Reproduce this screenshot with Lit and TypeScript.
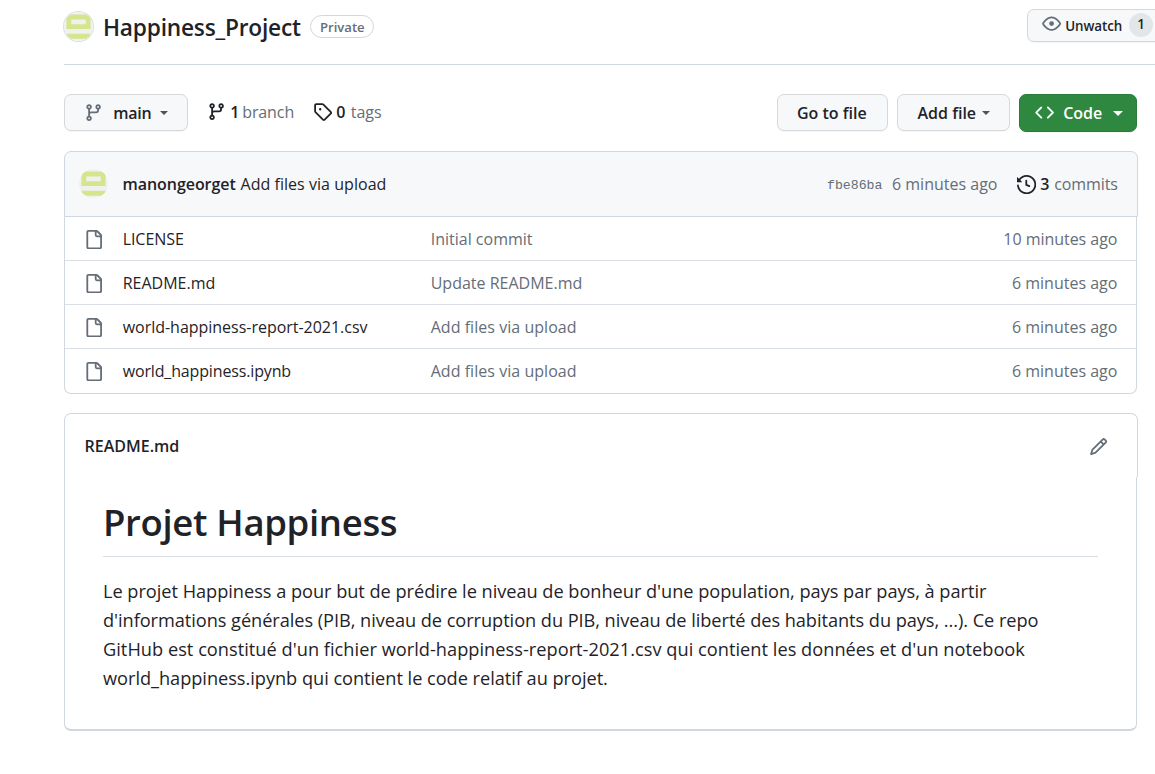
import { LitElement, html, css, svg } from "lit";
import { customElement } from "lit/decorators.js";

const BRANCH = "M11.75 2.5a.75.75 0 100 1.5.75.75 0 000-1.5zm-2.25.75a2.25 2.25 0 113 2.122V6A2.5 2.5 0 0110 8.5H6a1 1 0 00-1 1v1.128a2.251 2.251 0 11-1.5 0V5.372a2.25 2.25 0 111.5 0v1.836A2.492 2.492 0 016 7h4a1 1 0 001-1v-.628A2.25 2.25 0 019.5 3.25zM4.25 12a.75.75 0 100 1.5.75.75 0 000-1.5zM3.5 3.25a.75.75 0 111.5 0 .75.75 0 01-1.5 0z";
const TAG = "M2.5 7.775V2.75a.25.25 0 01.25-.25h5.025a.25.25 0 01.177.073l6.25 6.25a.25.25 0 010 .354l-5.025 5.025a.25.25 0 01-.354 0l-6.25-6.25a.25.25 0 01-.073-.177zm-1.5 0V2.75C1 1.784 1.784 1 2.75 1h5.025c.464 0 .91.184 1.238.513l6.25 6.25a1.75 1.75 0 010 2.474l-5.026 5.026a1.75 1.75 0 01-2.474 0l-6.25-6.25A1.75 1.75 0 011 7.775zM6 5a1 1 0 100 2 1 1 0 000-2z";
const HISTORY = "M1.643 3.143L.427 1.927A.25.25 0 000 2.104V5.75c0 .138.112.25.25.25h3.646a.25.25 0 00.177-.427L2.715 4.215a6.5 6.5 0 11-1.18 4.458.75.75 0 10-1.493.154 8.001 8.001 0 101.6-5.684zM7.75 4a.75.75 0 01.75.75v2.992l2.028.812a.75.75 0 01-.557 1.392l-2.5-1A.75.75 0 017 8.25v-3.5A.75.75 0 017.75 4z";
const FILE = "M2 1.75C2 .784 2.784 0 3.75 0h6.586c.464 0 .909.184 1.237.513l2.914 2.914c.329.328.513.773.513 1.237v9.586A1.75 1.75 0 0113.25 16h-9.5A1.75 1.75 0 012 14.25V1.75zm1.75-.25a.25.25 0 00-.25.25v12.5c0 .138.112.25.25.25h9.5a.25.25 0 00.25-.25V6h-2.75A1.75 1.75 0 019 4.25V1.5H3.75zm6.75.062V4.25c0 .138.112.25.25.25h2.688a.252.252 0 00-.011-.013l-2.914-2.914a.272.272 0 00-.013-.011z";
const PENCIL = "M11.013 1.427a1.75 1.75 0 012.474 0l1.086 1.086a1.75 1.75 0 010 2.474l-8.61 8.61c-.21.21-.47.364-.756.445l-3.251.93a.75.75 0 01-.927-.928l.929-3.25a1.75 1.75 0 01.445-.758l8.61-8.61zm1.414 1.06a.25.25 0 00-.354 0L10.811 3.75l1.439 1.44 1.263-1.263a.25.25 0 000-.354l-1.086-1.086zM11.189 6.25L9.75 4.81l-6.286 6.287a.25.25 0 00-.064.108l-.558 1.953 1.953-.558a.249.249 0 00.108-.064l6.286-6.286z";
const EYE = "M1.679 7.932c.412-.621 1.242-1.75 2.366-2.717C5.175 4.242 6.527 3.5 8 3.5c1.473 0 2.824.742 3.955 1.715 1.124.967 1.954 2.096 2.366 2.717a.119.119 0 010 .136c-.412.621-1.242 1.75-2.366 2.717C10.825 11.758 9.473 12.5 8 12.5c-1.473 0-2.824-.742-3.955-1.715C2.92 9.818 2.09 8.69 1.679 8.068a.119.119 0 010-.136zM8 2c-1.981 0-3.67.992-4.933 2.078C1.797 5.169.88 6.423.43 7.1a1.619 1.619 0 000 1.798c.45.678 1.367 1.932 2.637 3.024C4.329 13.008 6.019 14 8 14c1.981 0 3.67-.992 4.933-2.078 1.27-1.091 2.187-2.345 2.637-3.023a1.619 1.619 0 000-1.798c-.45-.678-1.367-1.932-2.637-3.023C11.671 2.992 9.981 2 8 2zm0 8a2 2 0 100-4 2 2 0 000 4z";
const CODE = "M4.72 3.22a.75.75 0 011.06 1.06L2.06 8l3.72 3.72a.75.75 0 11-1.06 1.06L.47 8.53a.75.75 0 010-1.06l4.25-4.25zm6.56 0a.75.75 0 10-1.06 1.06L13.94 8l-3.72 3.72a.75.75 0 101.06 1.06l4.25-4.25a.75.75 0 000-1.06l-4.25-4.25z";

const icon = (d: string) =>
  html`<svg class="icon" viewBox="0 0 16 16">${svg`<path fill-rule="evenodd" d=${d}></path>`}</svg>`;

const avatar = (cls: string) => html`<svg class=${cls} viewBox="0 0 30 30">
  <defs><clipPath id="round"><circle cx="15" cy="15" r="15"></circle></clipPath></defs>
  <g clip-path="url(#round)">
    <rect width="30" height="30" fill="#f0f0f0"></rect>
    <path fill="#d4e68b" fill-rule="evenodd" d="M2.5 2.5h25v15.2h-25zM7.5 7.7v4.9h15V7.7zM2.5 22.6h25v5h-25z"></path>
  </g>
</svg>`;

const files = [
  { name: "LICENSE", track: "t-lic", msg: "Initial commit", msgTrack: "", when: "10 minutes ago", whenTrack: "t-ten" },
  { name: "README.md", track: "", msg: "Update README.md", msgTrack: "", when: "6 minutes ago", whenTrack: "" },
  { name: "world-happiness-report-2021.csv", track: "t-csv", msg: "Add files via upload", msgTrack: "t-add", when: "6 minutes ago", whenTrack: "" },
  { name: "world_happiness.ipynb", track: "t-nb", msg: "Add files via upload", msgTrack: "t-add", when: "6 minutes ago", whenTrack: "" },
];

@customElement("app-root")
export class AppRoot extends LitElement {
  static styles = css`
    :host { display: block; width: 1155px; height: 774px; overflow: hidden; background: #fff; color: #1f2328;
      font: 400 16px/24px "Open Sans", "Noto Sans", sans-serif; white-space: nowrap; box-sizing: border-box; padding-left: 64px; }
    * { box-sizing: border-box; }
    .icon { width: 19.2px; height: 19.2px; fill: currentColor; flex: none; display: block; }
    .top { height: 65px; border-bottom: 1px solid #d0d7de; display: flex; padding-top: 9px; }
    .top > * { flex: none; }
    .face { width: 29px; height: 29px; margin: 3px 1px 0 0; border-radius: 50%; box-shadow: 0 0 0 1px #dcdee2; }
    .title { margin: 3px 0 0 9px; width: 207px; font-size: 22.7px; font-weight: 600; line-height: 32px; letter-spacing: -.2px; }
    .pill { height: 23px; width: 64px; margin-top: 6px; border: 1px solid #d0d7de; border-radius: 12px; color: #656d76; font-size: 13.1px; font-weight: 600; line-height: 22px; padding-left: 9px; }
    .btn { height: 37px; border: 1px solid #d5d8da; border-radius: 7px; background: #f6f8fa; display: flex; align-items: center; box-shadow: 0 1px 0 rgba(27,31,36,.04); font-weight: 600; flex: none; }
    .watch { height: 33px; width: 140px; margin-left: 653px; padding-left: 14px; font-size: 13.4px; }
    .watch .icon { color: #656d76; margin-top: -4px; }
    .watch .lbl { margin-left: 4px; width: 64px; letter-spacing: -.08px; }
    .count { width: 24px; height: 24px; border-radius: 12px; background: #e3e6e8; line-height: 23px; text-align: center; margin-top: -1px; }
    .bar { display: flex; margin-top: 29px; height: 38px; width: 1073px; }
    .main { width: 124px; padding-left: 19px; }
    .main .icon { color: #656d76; }
    .main .lbl { margin-left: 10px; width: 47px; letter-spacing: -.2px; }
    .caret { width: 0; height: 0; border: 4.5px solid transparent; border-top-color: #4d5358; border-bottom: 0; }
    .dim { color: #656d76; }
    .stat { display: flex; align-items: center; height: 36px; }
    .stat b { font-weight: 600; width: 12px; }
    .branches { margin-left: 19px; width: 106px; letter-spacing: -.1px; } .branches .icon { margin-right: 4px; }
    .tags { width: 464px; } .tags .icon { margin-right: 4px; } .tags b { width: 14.5px; }
    .goto { width: 111px; padding-left: 19px; }
    .addf { width: 113px; margin-left: 9px; padding-left: 19.5px; } .addf .lbl { width: 64.5px; }
    .code { width: 118px; height: 38px; margin-left: 9px; background: #2f8840; border-color: #2b7b3b; color: #fff; padding-left: 15px; }
    .code .lbl { margin-left: 9px; width: 50px; }
    .code .caret { border-width: 5px; border-bottom: 0; border-top-color: #fff; }
    .list { margin-top: 19px; width: 1074px; height: 243px; }
    .head { height: 66px; border: 1px solid #d0d7de; border-radius: 7px 7px 0 0; background: #f6f8fa; display: flex; align-items: center; padding-left: 14px; }
    .head > * { flex: none; }
    .mini { width: 29px; height: 29px; margin-top: -2px; }
    .who { font-weight: 600; margin-left: 14.5px; width: 118px; letter-spacing: -.05px; }
    .lastmsg { width: 586.5px; letter-spacing: .04px; }
    .sha { font: 13.2px/24px "Liberation Mono", monospace; color: #656d76; width: 65px; margin-top: 4px; }
    .ago { width: 124.5px; color: #656d76; }
    .head .icon { margin-right: 4.5px; margin-top: 1px; } .head b { font-weight: 600; width: 14px; }
    .head .dim { letter-spacing: -.08px; }
    .rows { width: 1073px; border: 1px solid #d0d7de; border-top: 0; border-radius: 0 0 7px 7px; }
    .row { display: flex; align-items: center; height: 44px; border-top: 1px solid #d8dee4; padding: 0 18.6px 0 19px; }
    .row:first-child { height: 43px; border-top: 0; }
    .row:last-child { height: 45px; padding-bottom: 1px; }
    .row .icon { color: #656d76; margin-top: 2px; }
    .fname { margin-left: 19.5px; width: 308px; } .fmsg { flex: 1; color: #656d76; } .when { color: #656d76; }
    .t-lic { letter-spacing: -.07px; } .t-csv { letter-spacing: -.02px; } .t-nb { letter-spacing: -.15px; } .t-ten { letter-spacing: -.04px; } .t-add { letter-spacing: .04px; }
    .readme { margin-top: 19px; width: 1074px; height: 318px; }
    .rhead { height: 64px; border: 1px solid #d0d7de; border-bottom: 0; border-radius: 7px 7px 0 0; display: flex; align-items: center; justify-content: space-between; padding: 1px 29px 0 19.5px; font-weight: 600; }
    .rhead .icon { color: #656d76; margin-top: 1px; }
    .rbody { width: 1073px; height: 254px; border: 1px solid #d0d7de; border-top: 0; border-bottom-width: 2px; border-radius: 0 0 7px 7px; padding: 20px 38px 0; }
    h1 { margin: 0; height: 60px; font-size: 36.5px; line-height: 50px; font-weight: 600; letter-spacing: -.33px; border-bottom: 1px solid #d8dee4; }
    .para { margin: 20px 0 0; font-size: 18.2px; line-height: 29px; }
    .para span { display: block; }
    .l1 { letter-spacing: -.03px; } .l2 { letter-spacing: -.05px; } .l3 { letter-spacing: .03px; } .l4 { letter-spacing: -.03px; }
  `;
  render() {
    return html`
      <header class="top">
        ${avatar("face")}
        <div class="title">Happiness_Project</div>
        <div class="pill">Private</div>
        <div class="btn watch">${icon(EYE)}<span class="lbl">Unwatch</span><span class="count">1</span></div>
      </header>
      <nav class="bar">
        <div class="btn main">${icon(BRANCH)}<span class="lbl">main</span><i class="caret"></i></div>
        <div class="stat branches">${icon(BRANCH)}<b>1</b><span class="dim">branch</span></div>
        <div class="stat tags">${icon(TAG)}<b>0</b><span class="dim">tags</span></div>
        <div class="btn goto">Go to file</div>
        <div class="btn addf"><span class="lbl">Add file</span><i class="caret"></i></div>
        <div class="btn code">${icon(CODE)}<span class="lbl">Code</span><i class="caret"></i></div>
      </nav>
      <section class="list">
        <div class="head">
          ${avatar("mini")}
          <span class="who">manongeorget</span><span class="lastmsg">Add files via upload</span>
          <span class="sha">fbe86ba</span><span class="ago">6 minutes ago</span>
          ${icon(HISTORY)}<b>3</b><span class="dim">commits</span>
        </div>
        <div class="rows">
          ${files.map((f) => html`<div class="row">${icon(FILE)}
            <span class="fname ${f.track}">${f.name}</span><span class="fmsg ${f.msgTrack}">${f.msg}</span><span class="when ${f.whenTrack}">${f.when}</span></div>`)}
        </div>
      </section>
      <section class="readme">
        <div class="rhead"><span>README.md</span>${icon(PENCIL)}</div>
        <div class="rbody">
          <h1>Projet Happiness</h1>
          <p class="para">
            <span class="l1">Le projet Happiness a pour but de prédire le niveau de bonheur d'une population, pays par pays, à partir</span>
            <span class="l2">d'informations générales (PIB, niveau de corruption du PIB, niveau de liberté des habitants du pays, ...). Ce repo</span>
            <span class="l3">GitHub est constitué d'un fichier world-happiness-report-2021.csv qui contient les données et d'un notebook</span>
            <span class="l4">world_happiness.ipynb qui contient le code relatif au projet.</span>
          </p>
        </div>
      </section>
    `;
  }
}
